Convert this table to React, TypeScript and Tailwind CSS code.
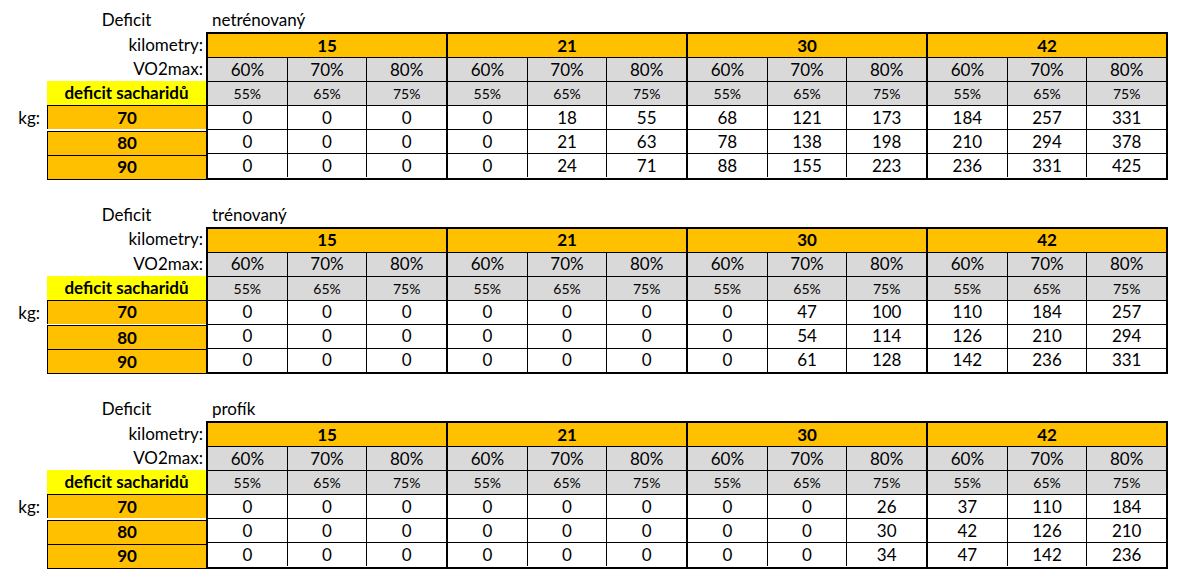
import React from "react";

interface Sheet {
    title: string;
    values: number[][];
}

const sheets: Sheet[] = [
    {
        title: "netrénovaný",
        values: [
            [0, 0, 0, 0, 18, 55, 68, 121, 173, 184, 257, 331],
            [0, 0, 0, 0, 21, 63, 78, 138, 198, 210, 294, 378],
            [0, 0, 0, 0, 24, 71, 88, 155, 223, 236, 331, 425],
        ],
    },
    {
        title: "trénovaný",
        values: [
            [0, 0, 0, 0, 0, 0, 0, 47, 100, 110, 184, 257],
            [0, 0, 0, 0, 0, 0, 0, 54, 114, 126, 210, 294],
            [0, 0, 0, 0, 0, 0, 0, 61, 128, 142, 236, 331],
        ],
    },
    {
        title: "profík",
        values: [
            [0, 0, 0, 0, 0, 0, 0, 0, 26, 37, 110, 184],
            [0, 0, 0, 0, 0, 0, 0, 0, 30, 42, 126, 210],
            [0, 0, 0, 0, 0, 0, 0, 0, 34, 47, 142, 236],
        ],
    },
];

const km = ["15", "21", "30", "42"];
const vo2 = ["60%", "70%", "80%"];
const deficit = ["55%", "65%", "75%"];
const kg = ["70", "80", "90"];

function CellRow({ items, className, small }: { items: (string | number)[]; className?: string; small?: boolean }) {
    return (
        <div className={`flex h-[24px] border-t border-black ${className ?? ""}`}>
            {items.map((v, i) => (
                <div
                    key={i}
                    className={`flex flex-1 items-center justify-center ${i > 0 ? "border-l border-black" : ""} ${small ? "text-[14px]" : "text-[17px]"}`}
                >
                    {v}
                </div>
            ))}
        </div>
    );
}

function Block({ sheet }: { sheet: Sheet }) {
    return (
        <div>
            {/* title row */}
            <div className="flex h-[24px] items-center text-[17px]">
                <div className="w-[47px]" />
                <div className="w-[159px] text-center">Deficit</div>
                <div className="pl-[6px]">{sheet.title}</div>
            </div>

            <div className="flex">
                {/* labels */}
                <div className="flex w-[206px] shrink-0 flex-col text-[17px]">
                    <div className="flex h-[25px] items-center justify-end pr-[3px]">kilometry:</div>
                    <div className="flex h-[24px] items-center justify-end pr-[3px]">VO2max:</div>
                    <div className="ml-[47px] flex h-[24px] items-center justify-center bg-[#ffff00] font-bold">deficit sacharidů</div>
                    {kg.map((k, i) => (
                        <div key={k} className="flex">
                            <div className="flex w-[47px] items-center justify-end pr-[7px]">{i === 0 ? "kg:" : ""}</div>
                            <div
                                className={`flex h-[24px] flex-1 items-center justify-center border-l border-t border-black bg-[#ffc000] font-bold ${i === 2 ? "h-[25px] border-b" : ""}`}
                            >
                                {k}
                            </div>
                        </div>
                    ))}
                </div>

                {/* data */}
                <div className="flex w-[962px] border-2 border-black">
                    {km.map((k, g) => (
                        <div key={k} className={`flex flex-1 flex-col ${g > 0 ? "border-l-2 border-black" : ""}`}>
                            <div className="flex h-[23px] items-center justify-center bg-[#ffc000] text-[17px] font-bold">{k}</div>
                            <CellRow items={vo2} className="bg-[#d9d9d9]" />
                            <CellRow items={deficit} className="bg-[#d9d9d9]" small />
                            {sheet.values.map((row, r) => (
                                <CellRow key={r} items={row.slice(g * 3, g * 3 + 3)} />
                            ))}
                        </div>
                    ))}
                </div>
            </div>
        </div>
    );
}

export default function App() {
    return (
        <div className="min-h-[583px] w-[1188px] bg-white pt-[8px] font-[Lato,sans-serif] text-black">
            <div className="flex flex-col gap-[23px]">
                {sheets.map((s) => (
                    <Block key={s.title} sheet={s} />
                ))}
            </div>
        </div>
    );
}
